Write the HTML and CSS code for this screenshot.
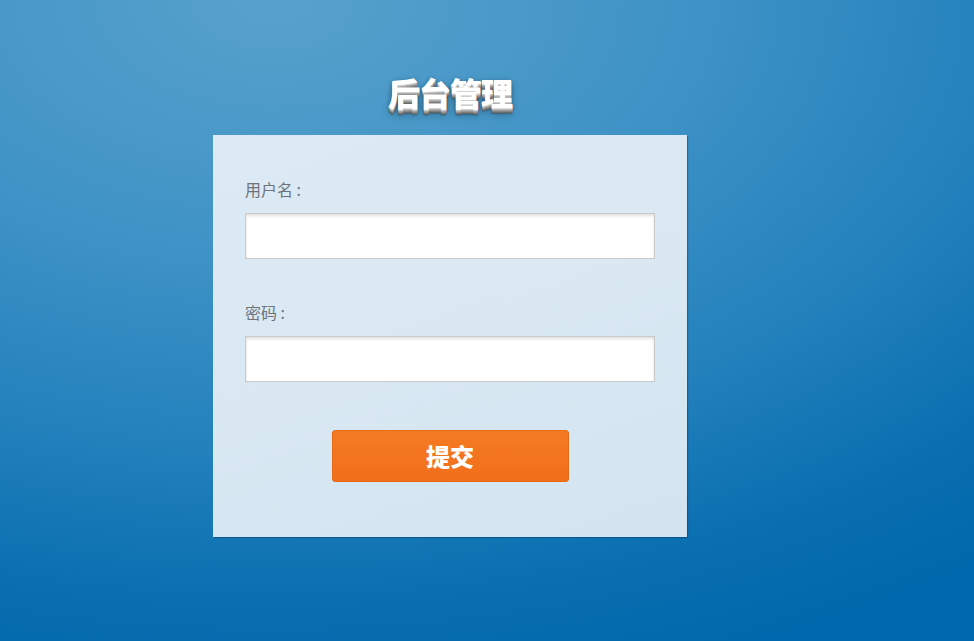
FILE: index.html
```html
<!DOCTYPE html>
<html lang="zh-CN">
<head>
<meta charset="utf-8">
<title>后台管理</title>
<link rel="stylesheet" href="styles.css">
</head>
<body>
<div class="page">
  <div class="wrap">
    <h1 class="title">后台管理</h1>
    <form class="card">
      <label class="label" for="u">用户名 :</label>
      <input class="field" id="u" type="text">
      <label class="label label-2" for="p">密码 :</label>
      <input class="field" id="p" type="password">
      <div class="actions">
        <button class="btn" type="button">提交</button>
      </div>
    </form>
  </div>
</div>
</body>
</html>
```
FILE: styles.css
```css
html, body {
  margin: 0;
  padding: 0;
  height: 100%;
}
body {
  font-family: "Noto Sans CJK SC", "Liberation Sans", sans-serif;
  background: radial-gradient(ellipse 120% 110% at 28% 0%, #58a1cc 0%, #3f93c6 35%, #2582bd 62%, #0a6fb0 85%, #0068ac 100%);
  overflow: hidden;
}
.page {
  height: 100%;
  padding-left: 213px;
  padding-top: 69px;
  box-sizing: border-box;
}
.wrap {
  width: 474px;
}
.title {
  margin: 0 0 19px;
  height: 47px;
  text-align: center;
  font-size: 32px;
  line-height: 47px;
  font-weight: 900;
  color: #fff;
  letter-spacing: -1px;
  text-shadow:
    0 1px 0 #d0d0d0,
    0 2px 0 #b0b0b0,
    0 3px 0 #959595,
    0 4px 0 #7c7c7c,
    0 5px 0 #646464,
    0 6px 1px rgba(0,0,0,.2),
    0 0 5px rgba(0,0,0,.15),
    0 2px 3px rgba(0,0,0,.35),
    0 6px 8px rgba(0,0,0,.3);
}
.card {
  display: flex;
  flex-direction: column;
  background: linear-gradient(160deg, #dceaf5 0%, #d9e8f3 50%, #d3e4f0 100%);
  padding: 42px 32px 55px;
  box-shadow: 1px 1px 1px rgba(0, 40, 90, .35);
}
.label {
  font-size: 16px;
  line-height: 24px;
  color: #6e7378;
  margin-bottom: 12px;
}
.label-2 {
  margin-top: 41px;
}
.field {
  display: block;
  height: 46px;
  width: 410px;
  box-sizing: border-box;
  margin: 0;
  border: 1px solid #c9c9c9;
  background: #fff;
  box-shadow: inset 0 2px 3px rgba(0,0,0,.12);
  outline: none;
  font-size: 16px;
  padding: 0 10px;
}
.actions {
  display: flex;
  justify-content: center;
  margin-top: 48px;
}
.btn {
  width: 237px;
  height: 52px;
  border: 1px solid #e66a16;
  border-radius: 3px;
  background: linear-gradient(#f47b22, #f26e1b);
  color: #fff;
  font-family: "Noto Sans CJK SC", sans-serif;
  font-size: 24px;
  line-height: 1;
  font-weight: 900;
  padding: 0;
  cursor: pointer;
}
```
